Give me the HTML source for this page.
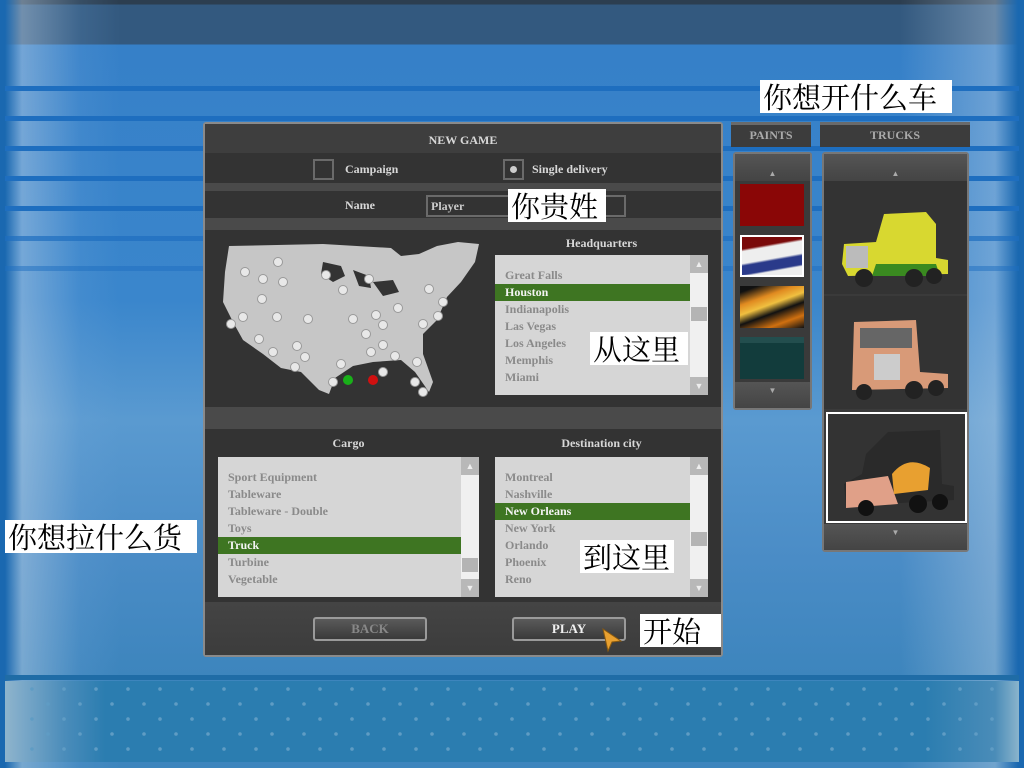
<!DOCTYPE html>
<html><head><meta charset="utf-8"><style>
*{margin:0;padding:0;box-sizing:border-box}
body{width:1024px;height:768px;overflow:hidden;position:relative;font-family:"Liberation Serif",serif;background:#3a84c4}
.abs{position:absolute}
.bg{left:0;top:0;width:1024px;height:768px;background:
linear-gradient(90deg,#1a68b0 0,#1a68b0 5px,rgba(190,210,230,.45) 22px,rgba(120,170,220,.15) 80px,rgba(0,0,0,0) 120px,rgba(0,0,0,0) 900px,rgba(190,210,230,.4) 995px,#1a68b0 1018px),
linear-gradient(180deg,#2c3e50 0,#2c3e50 4px,#33597f 5px,#33597f 44px,#3680c8 45px,#3a86cc 300px,#5a9ad0 420px,#4a8cc6 560px,#3d85bd 675px)}
.stripe{left:5px;width:1014px;height:5px;background:#1e6ebf}
.lbl{background:#fff;color:#000;font-family:"Noto Serif CJK SC","Noto Sans CJK SC",serif;font-size:29px;line-height:33px;height:33px;padding:0 3px;white-space:nowrap}
.dlg{left:203px;top:122px;width:520px;height:535px;background:#333;border:2px solid #8a8a8a;border-radius:3px}
.t{color:#d8d8d8;font-weight:bold;font-size:12px;text-align:center}
.list{background:#d6d6d6}
.list div{height:17px;line-height:17px;font-size:12px;font-weight:bold;color:#8a8a8a;padding-left:10px;white-space:nowrap}
.list .sel{background:#3e7522;color:#f4f4f4}
.sb{background:#f0f0f0;width:18px}
.btn{border:2px solid #9a9a9a;border-radius:3px;background:linear-gradient(#5a5a5a,#3a3a3a);height:24px;text-align:center;line-height:20px;font-size:13px;font-weight:bold}
.hdr{background:#3c3c3c;border-top:3px solid #6a6a6a;color:#aaa;font-weight:bold;font-size:12px;text-align:center;line-height:21px}
.pan{background:#3a3a3a;border:2px solid #777;border-radius:3px}
</style></head><body>
<div class="abs bg"></div>
<div class="abs stripe" style="top:86px"></div>
<div class="abs stripe" style="top:116px"></div>
<div class="abs stripe" style="top:146px"></div>
<div class="abs stripe" style="top:176px"></div>
<div class="abs stripe" style="top:206px"></div>
<div class="abs stripe" style="top:236px;opacity:.7"></div>
<div class="abs stripe" style="top:266px;opacity:.5"></div>
<div class="abs stripe" style="top:675px;height:5px;background:#1f6ca6"></div>
<div class="abs" style="left:5px;top:681px;width:1014px;height:81px;background:linear-gradient(90deg,#8fb4cc 0,#7aa8c8 18px,#4a8cba 60px,#2b7db0 100px,#2b7db0 920px,#4a8cb8 990px,#8ab4cc 1014px)"></div>
<svg class="abs" style="left:24px;top:681px" width="976" height="81"><defs><pattern id="d" width="32" height="30" patternUnits="userSpaceOnUse"><circle cx="8" cy="8" r="1.8" fill="#5f9cc4"/><circle cx="24" cy="23" r="1.8" fill="#5f9cc4"/></pattern></defs><rect width="976" height="81" fill="url(#d)"/></svg>

<div class="abs dlg">
 <div class="abs" style="left:0;top:0;width:516px;height:29px;background:#3e3e3e"></div>
 <div class="abs t" style="left:0;top:9px;width:516px">NEW GAME</div>
 <div class="abs" style="left:0;top:59px;width:516px;height:8px;background:#4a4a4a"></div>
 <div class="abs" style="left:108px;top:35px;width:21px;height:21px;border:2px solid #6a6a6a"></div>
 <div class="abs t" style="left:140px;top:38px">Campaign</div>
 <div class="abs" style="left:298px;top:35px;width:21px;height:21px;border:2px solid #6a6a6a"><div class="abs" style="left:5px;top:5px;width:7px;height:7px;border-radius:50%;background:#ccc"></div></div>
 <div class="abs t" style="left:327px;top:38px">Single delivery</div>
 <div class="abs t" style="left:140px;top:74px">Name</div>
 <div class="abs" style="left:221px;top:71px;width:200px;height:22px;border:2px solid #6a6a6a;color:#ccc;font-size:12px;font-weight:bold;line-height:18px;padding-left:3px">Player</div>
 <div class="abs" style="left:0;top:94px;width:516px;height:12px;background:#4a4a4a"></div>
 <svg class="abs" style="left:18px;top:118px" width="258" height="160" viewBox="0 0 258 160">
  <path d="M6 4 L100 2 L168 6 L178 14 L196 12 L214 4 L235 0 L256 2 L252 20 L238 40 L224 55 L214 78 L200 92 L200 112 L210 140 L206 150 L192 130 L178 118 L150 120 L130 124 L112 136 L106 152 L96 148 L78 130 L58 126 L40 112 L20 98 L10 80 L0 60 L2 30 Z" fill="#c6c6c6"/>
  <path d="M100 20 L118 24 L122 34 L110 40 L98 32Z M130 28 L146 34 L148 46 L136 44Z M150 40 L170 38 L176 50 L160 54Z" fill="#333"/>
  <g fill="#e8e8e8" stroke="#999" stroke-width="1">
   <circle cx="22" cy="30" r="4.5"/><circle cx="55" cy="20" r="4.5"/><circle cx="40" cy="37" r="4.5"/><circle cx="60" cy="40" r="4.5"/><circle cx="39" cy="57" r="4.5"/><circle cx="103" cy="33" r="4.5"/><circle cx="120" cy="48" r="4.5"/><circle cx="146" cy="37" r="4.5"/><circle cx="206" cy="47" r="4.5"/><circle cx="220" cy="60" r="4.5"/><circle cx="20" cy="75" r="4.5"/><circle cx="54" cy="75" r="4.5"/><circle cx="85" cy="77" r="4.5"/><circle cx="130" cy="77" r="4.5"/><circle cx="153" cy="73" r="4.5"/><circle cx="160" cy="83" r="4.5"/><circle cx="143" cy="92" r="4.5"/><circle cx="175" cy="66" r="4.5"/><circle cx="200" cy="82" r="4.5"/><circle cx="215" cy="74" r="4.5"/><circle cx="36" cy="97" r="4.5"/><circle cx="50" cy="110" r="4.5"/><circle cx="74" cy="104" r="4.5"/><circle cx="82" cy="115" r="4.5"/><circle cx="72" cy="125" r="4.5"/><circle cx="148" cy="110" r="4.5"/><circle cx="160" cy="103" r="4.5"/><circle cx="172" cy="114" r="4.5"/><circle cx="118" cy="122" r="4.5"/><circle cx="110" cy="140" r="4.5"/><circle cx="194" cy="120" r="4.5"/><circle cx="192" cy="140" r="4.5"/><circle cx="200" cy="150" r="4.5"/><circle cx="8" cy="82" r="4.5"/><circle cx="160" cy="130" r="4.5"/>
  </g>
  <circle cx="125" cy="138" r="5" fill="#19b019"/><circle cx="150" cy="138" r="5" fill="#d01010"/>
 </svg>
 <div class="abs t" style="left:290px;top:112px;width:213px">Headquarters</div>
 <div class="abs list" style="left:290px;top:131px;width:213px;height:140px;padding-top:12px">
  <div>Great Falls</div><div class="sel" style="width:195px">Houston</div><div>Indianapolis</div><div>Las Vegas</div><div>Los Angeles</div><div>Memphis</div><div>Miami</div>
 </div>
 <div class="abs sb" style="left:485px;top:149px;height:104px"></div>
 <div class="abs" style="left:486px;top:183px;width:16px;height:14px;background:#b4b4b4"></div>
 <div class="abs" style="left:485px;top:131px;width:18px;height:18px;background:#b8b8b8;color:#eee;font-size:9px;text-align:center;line-height:18px">▲</div>
 <div class="abs" style="left:485px;top:253px;width:18px;height:18px;background:#b8b8b8;color:#eee;font-size:9px;text-align:center;line-height:18px">▼</div>
 <div class="abs" style="left:0;top:283px;width:516px;height:22px;background:#4a4a4a"></div>
 <div class="abs t" style="left:13px;top:312px;width:261px">Cargo</div>
 <div class="abs t" style="left:290px;top:312px;width:213px">Destination city</div>
 <div class="abs list" style="left:13px;top:333px;width:261px;height:140px;padding-top:12px">
  <div>Sport Equipment</div><div>Tableware</div><div>Tableware - Double</div><div>Toys</div><div class="sel" style="width:243px">Truck</div><div>Turbine</div><div>Vegetable</div>
 </div>
 <div class="abs sb" style="left:256px;top:351px;height:104px"></div>
 <div class="abs" style="left:257px;top:434px;width:16px;height:14px;background:#b4b4b4"></div>
 <div class="abs" style="left:256px;top:333px;width:18px;height:18px;background:#b8b8b8;color:#eee;font-size:9px;text-align:center;line-height:18px">▲</div>
 <div class="abs" style="left:256px;top:455px;width:18px;height:18px;background:#b8b8b8;color:#eee;font-size:9px;text-align:center;line-height:18px">▼</div>
 <div class="abs list" style="left:290px;top:333px;width:213px;height:140px;padding-top:12px">
  <div>Montreal</div><div>Nashville</div><div class="sel" style="width:195px">New Orleans</div><div>New York</div><div>Orlando</div><div>Phoenix</div><div>Reno</div>
 </div>
 <div class="abs sb" style="left:485px;top:351px;height:104px"></div>
 <div class="abs" style="left:486px;top:408px;width:16px;height:14px;background:#b4b4b4"></div>
 <div class="abs" style="left:485px;top:333px;width:18px;height:18px;background:#b8b8b8;color:#eee;font-size:9px;text-align:center;line-height:18px">▲</div>
 <div class="abs" style="left:485px;top:455px;width:18px;height:18px;background:#b8b8b8;color:#eee;font-size:9px;text-align:center;line-height:18px">▼</div>
 <div class="abs" style="left:0;top:478px;width:516px;height:53px;background:linear-gradient(#444,#3c3c3c)"></div>
 <div class="abs btn" style="left:108px;top:493px;width:114px;color:#888">BACK</div>
 <div class="abs btn" style="left:307px;top:493px;width:114px;color:#f0f0f0">PLAY</div>
 <svg class="abs" style="left:396px;top:503px" width="24" height="26"><path d="M2 2 L20 14 L11 15 L7 24 Z" fill="#e8a030" stroke="#8a5a10"/></svg>
</div>

<div class="abs hdr" style="left:731px;top:122px;width:80px;height:25px">PAINTS</div>
<div class="abs hdr" style="left:820px;top:122px;width:150px;height:25px">TRUCKS</div>
<div class="abs pan" style="left:733px;top:152px;width:79px;height:258px">
 <div class="abs" style="left:0;top:0;width:75px;height:27px;background:linear-gradient(#555,#444);color:#aaa;font-size:8px;text-align:center;line-height:40px">▲</div>
 <div class="abs" style="left:5px;top:30px;width:64px;height:42px;background:#8a0606"></div>
 <div class="abs" style="left:5px;top:81px;width:64px;height:42px;border:2px solid #fff;background:linear-gradient(170deg,#7a0a0a 0,#7a0a0a 25%,#eee 30%,#eee 55%,#2a3a8a 60%,#2a3a8a 78%,#eee 82%)"></div>
 <div class="abs" style="left:5px;top:132px;width:64px;height:42px;background:linear-gradient(160deg,#111 10%,#e08a20 30%,#f0c040 45%,#111 60%,#d07010 80%,#111)"></div>
 <div class="abs" style="left:5px;top:183px;width:64px;height:42px;background:#123c3c;border-top:6px solid #234e4e"></div>
 <div class="abs" style="left:0;top:228px;width:75px;height:26px;background:linear-gradient(#555,#444);color:#aaa;font-size:8px;text-align:center;line-height:18px">▼</div>
</div>
<div class="abs pan" style="left:822px;top:152px;width:147px;height:400px">
 <div class="abs" style="left:0;top:0;width:143px;height:27px;background:linear-gradient(#555,#444);color:#aaa;font-size:8px;text-align:center;line-height:40px">▲</div>
 <div class="abs" style="left:0;top:27px;width:143px;height:113px;background:#333"></div>
 <div class="abs" style="left:0;top:142px;width:143px;height:113px;background:#333"></div>
 <div class="abs" style="left:2px;top:258px;width:141px;height:111px;background:#333;border:2px solid #fff"></div>
 <svg class="abs" style="left:12px;top:50px" width="120" height="90"><path d="M8 40 L40 38 L48 10 L90 8 L100 20 L100 54 L112 56 L112 70 L12 72 L6 60Z" fill="#d8d830"/><rect x="10" y="42" width="22" height="22" fill="#bbb"/><path d="M40 60 L100 60 L104 72 L36 72Z" fill="#3a8a20"/><circle cx="28" cy="74" r="9" fill="#222"/><circle cx="78" cy="74" r="9" fill="#222"/><circle cx="98" cy="72" r="8" fill="#222"/></svg>
 <svg class="abs" style="left:20px;top:158px" width="110" height="92"><path d="M10 10 L72 8 L76 60 L104 62 L104 76 L8 78Z" fill="#d89a78"/><rect x="16" y="16" width="52" height="20" fill="#666"/><rect x="30" y="42" width="26" height="26" fill="#ccc"/><circle cx="20" cy="80" r="8" fill="#222"/><circle cx="70" cy="78" r="9" fill="#222"/><circle cx="92" cy="76" r="8" fill="#222"/></svg>
 <svg class="abs" style="left:14px;top:270px" width="120" height="95"><path d="M28 30 L50 8 L102 6 L104 60 L116 62 L116 76 L8 82 L6 60 L24 50Z" fill="#2a2a2a"/><path d="M8 58 L50 52 L60 80 L8 84Z" fill="#e0a088"/><path d="M54 50 Q70 30 92 44 L90 66 L56 70Z" fill="#e8a030"/><circle cx="28" cy="84" r="8" fill="#111"/><circle cx="80" cy="80" r="9" fill="#111"/><circle cx="102" cy="78" r="8" fill="#111"/></svg>
 <div class="abs" style="left:0;top:370px;width:143px;height:26px;background:linear-gradient(#555,#444);color:#aaa;font-size:8px;text-align:center;line-height:18px">▼</div>
</div>

<div class="abs lbl" style="left:760px;top:80px;width:192px">你想开什么车</div>
<div class="abs lbl" style="left:508px;top:189px;width:98px">你贵姓</div>
<div class="abs lbl" style="left:590px;top:332px;width:98px">从这里</div>
<div class="abs lbl" style="left:5px;top:520px;width:192px">你想拉什么货</div>
<div class="abs lbl" style="left:580px;top:540px;width:94px">到这里</div>
<div class="abs lbl" style="left:640px;top:614px;width:81px">开始</div>
</body></html>
